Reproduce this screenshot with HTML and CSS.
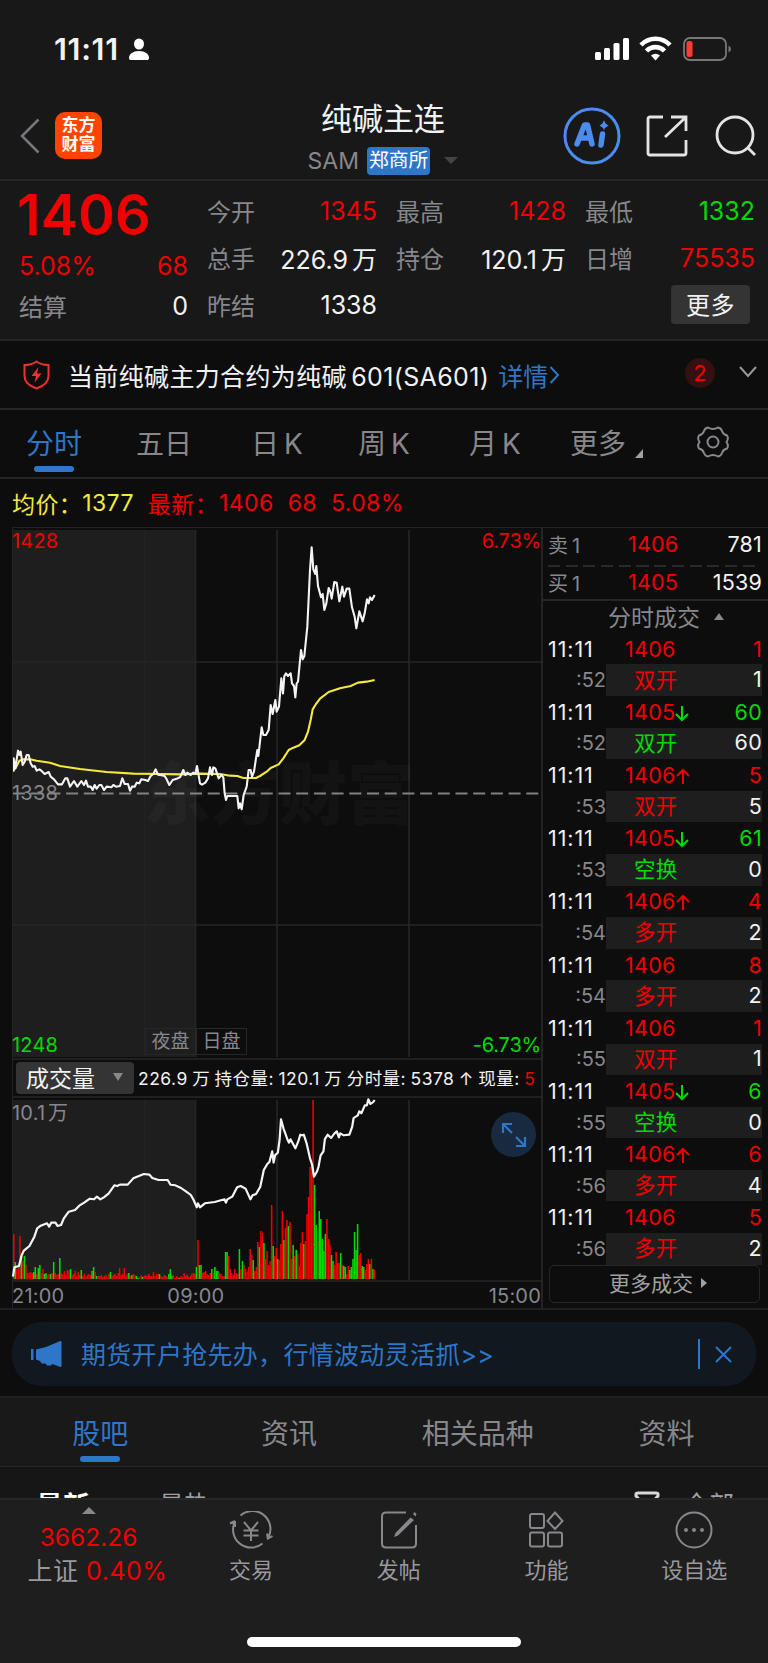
FILE: index.html
```html
<!DOCTYPE html>
<html lang="zh-CN">
<head>
  <meta charset="UTF-8" />
  <title>纯碱主连</title>
  <link rel="stylesheet" href="styles.css">
</head>
<body>

  <div class="status-bar">
    <span class="clock">11:11</span>
    <svg class="person" width="20" height="23" viewBox="0 0 20 23"><ellipse cx="10" cy="6" rx="5" ry="5.6"/><path d="M0 20c0-4 4-7 10-7s10 3 10 7c0 1.500-.7 2-2 2H2c-1.300 0-2-.5-2-2z"/></svg>
    <svg class="signals" width="135" height="26" viewBox="0 0 135 26">
      <rect x="0" y="16" width="6" height="8" rx="1.500"/><rect x="9" y="12" width="6" height="12" rx="1.500"/><rect x="18.500" y="7" width="6" height="17" rx="1.500"/><rect x="28" y="2" width="6" height="22" rx="1.500"/>
      <g fill="none" stroke="#fff" stroke-width="4.600"><path d="M46 9a20 20 0 0 1 29 0"/><path d="M51.500 15a12.500 12.500 0 0 1 18 0"/></g>
      <path d="M60.500 24.500l-4.500-5a6.500 6.500 0 0 1 9 0z"/>
      <rect x="89" y="2" width="42" height="22" rx="6" fill="none" stroke="#77777b" stroke-width="1.800"/>
      <rect x="91.500" y="5" width="6" height="16" rx="2.500" fill="#ff3b30"/>
      <path d="M133.500 9.500q2.500 1 2.500 3.500t-2.500 3.500z" fill="#77777b"/>
    </svg>
  </div>

  <header class="header">
    <svg class="back" width="20" height="36" viewBox="0 0 20 36"><path d="M18.500 1.500L2 18l16.500 16.500"/></svg>
    <div class="logo">东方<br>财富</div>
    <div class="title">
      <h1>纯碱主连</h1>
      <div class="subtitle"><span>SAM</span><b>郑商所</b><i></i></div>
    </div>
    <svg class="ai" width="58" height="58" viewBox="0 0 58 58">
      <circle cx="29" cy="29" r="27" fill="none" stroke="#4c8bf0" stroke-width="3"/>
      <g fill="none" stroke="#4c8bf0" stroke-width="5.500" stroke-linejoin="round" stroke-linecap="round"><path d="M14 37L21.500 18h3L29 37M17 31h10"/><path d="M39.500 27L38 38"/></g>
      <path d="M41 13q1 4 4.500 5.500Q42 20 41 23.500 40 20 36.500 18.500 40 17 41 13z" fill="#4c8bf0"/>
    </svg>
    <svg class="tool share" width="42" height="42" viewBox="0 0 42 42"><path d="M17 2H4Q2 2 2 4v34q0 2 2 2h34q2 0 2-2V25M25 2h15v14M40 2L19 22"/></svg>
    <svg class="tool search" width="42" height="42" viewBox="0 0 42 42"><circle cx="20" cy="20" r="18"/><path d="M32 32l8 8"/></svg>
  </header>

  <section class="quote">
    <div class="main-price">
      <strong>1406</strong>
      <div class="pair red"><span>5.08%</span><span>68</span></div>
      <div class="pair settle"><label>结算</label><span>0</span></div>
    </div>
    <div class="stats">
      <div class="pair"><label>今开</label><span class="red">1345</span></div>
      <div class="pair"><label>最高</label><span class="red">1428</span></div>
      <div class="pair"><label>最低</label><span class="green">1332</span></div>
      <div class="pair"><label>总手</label><span>226.9 万</span></div>
      <div class="pair"><label>持仓</label><span>120.1 万</span></div>
      <div class="pair"><label>日增</label><span class="red">75535</span></div>
      <div class="pair"><label>昨结</label><span>1338</span></div>
      <div></div>
      <div class="more-cell"><button class="more-btn">更多</button></div>
    </div>
  </section>

  <div class="notice">
    <svg width="27" height="30" viewBox="0 0 27 30"><path d="M13.500 1.500Q18 5 25.500 5v11c0 6-5 10-12 12.500C6.500 26 1.500 22 1.500 16V5Q9 5 13.500 1.500z" fill="none" stroke="#f23030" stroke-width="2"/><path d="M15.500 7L8.500 16h4.500l-1.500 6.500L18.500 13.500H14z" fill="#f23030"/></svg>
    <span class="notice-text">当前纯碱主力合约为纯碱 601(SA601)</span>
    <a>详情</a><svg class="go" width="11" height="18" viewBox="0 0 11 18"><path d="M1.500 1l7.500 8-7.500 8"/></svg>
    <span class="count">2</span>
    <svg class="fold" width="18" height="12" viewBox="0 0 18 12"><path d="M1 1l8 9 8-9"/></svg>
  </div>

  <nav class="periods">
    <span class="active">分时</span>
    <span>五日</span>
    <span>日 K</span>
    <span>周 K</span>
    <span>月 K</span>
    <span class="drop">更多</span>
    <svg width="34" height="32" viewBox="0 0 34 32"><path d="M12 1.500q5 3 10 0 3 .5 4 3.500 1 3.500 5 4.500 2 3-.5 6.500 2.500 3.500.5 6.500-4 1-5 4.500-1 3-4 3.500-5-3-10 0-3-.5-4-3.500-1-3.500-5-4.500-2-3 .5-6.500-2.500-3.500-.5-6.500 4-1 5-4.500 1-3 4-3.500z"/><circle cx="17" cy="16" r="5.500"/></svg>
  </nav>

  <div class="legend">
    <span class="yellow">均价：</span><span class="yellow avg">1377</span><span>最新：</span><span class="last">1406</span><span class="diff">68</span><span>5.08%</span>
  </div>

  <main class="board">
    <div class="charts">
      <div class="price-chart">
        <div class="watermark">东方财富</div>
        <svg width="530" height="531" viewBox="1 0 530 531">
          <rect class="night" x="1" y="2" width="183" height="527"/>
          <path class="grid" d="M183.500 2v527M265 2v527M397 2v527M0 134h530M0 397h530"/>
          <path class="grid faint" d="M132.500 2v527"/>
          <path class="base" d="M1 265.500h529"/>
          <g transform="translate(-12 -8) scale(.33333)">
            <polyline class="avg-line" points="40,752 48,742 58,722 70,718 90,718 110,722 150,728 180,738 240,747 320,756 400,761 480,762 540,763 600,761 660,762 690,767 712,768 730,774 768,774 780,768 800,755 812,744 836,733 850,715 866,690 880,683 898,676 914,660 924,635 932,600 938,568 948,552 960,536 986,516 1020,505 1052,498 1074,488 1100,485 1124,480"/>
            <polyline class="price-line" points="40,755 41,715 46,745 54,692 58,705 62,695 68,735 74,725 80,705 86,705 92,730 98,740 104,738 110,752 118,748 124,752 134,762 146,756 152,770 162,778 174,793 186,793 196,775 202,775 210,800 222,783 232,800 244,783 252,795 258,782 264,800 272,800 278,810 284,795 290,806 298,795 304,795 312,810 320,800 334,802 340,795 348,800 360,798 367,775 374,792 384,792 390,812 396,800 404,800 410,788 418,790 424,778 436,780 444,783 452,768 460,762 467,748 474,764 484,766 494,768 500,778 508,795 518,780 530,776 540,772 550,750 556,765 562,758 572,765 580,758 586,762 591,738 600,790 606,794 616,788 624,775 630,742 636,765 640,742 646,745 656,775 664,765 670,772 674,820 678,840 682,828 712,828 716,865 720,850 725,868 731,825 740,800 746,750 752,750 756,770 762,755 768,715 772,690 775,708 785,622 790,645 798,645 806,630 812,555 818,582 826,540 830,575 837,560 844,475 849,520 853,468 858,460 864,468 872,460 876,490 882,498 886,532 890,490 894,485 903,390 908,418 913,408 922,320 930,150 935,82 940,148 946,162 949,138 954,198 963,232 968,222 973,270 979,250 986,204 991,215 995,236 1003,186 1010,188 1018,244 1027,200 1032,230 1040,206 1048,206 1056,262 1064,290 1069,325 1078,274 1088,304 1094,280 1101,238 1106,250 1110,232 1116,240 1124,225"/>
          </g>
        </svg>
        <span class="mark top-left red">1428</span>
        <span class="mark top-right red">6.73%</span>
        <span class="mark middle">1338</span>
        <span class="mark bottom-left green">1248</span>
        <span class="mark bottom-right green">-6.73%</span>
        <div class="sessions"><span>夜盘</span><span>日盘</span></div>
      </div>

      <div class="indicator">
        <button>成交量<i></i></button>
        <p>226.9 万 持仓量: 120.1 万 分时量: 5378 ↑ 现量: <span class="red">5</span></p>
      </div>

      <div class="volume-chart">
        <svg width="530" height="183" viewBox="1 0 530 183">
          <rect class="night" x="1" y="2" width="183" height="180"/>
          <path class="grid" d="M183.500 2v180M265 2v180M397 2v180"/>
          <path class="grid faint" d="M132.500 2v180"/>
          <g id="bars"></g>
          <g transform="translate(-12 -88) scale(.3508 .33333)">
            <polyline class="price-line" points="37,800 41,772 54,768 62,735 68,722 84,708 98,680 106,655 116,647 134,640 140,650 146,638 158,638 164,648 174,645 182,625 196,605 214,600 226,587 240,578 256,566 268,568 276,560 286,568 296,562 310,550 326,526 334,528 342,524 364,524 380,505 396,498 410,492 426,494 434,504 452,510 478,510 486,524 500,526 516,534 530,544 544,555 552,570 561,592 564,580 570,592 584,580 612,576 640,568 644,578 648,568 662,560 676,532 686,528 700,536 714,568 720,556 730,552 742,530 752,480 762,462 768,456 776,424 780,458 784,436 792,428 797,390 801,328 808,355 820,390 824,398 828,388 842,415 850,395 856,374 862,376 866,374 874,400 884,446 890,465 895,500 904,484 908,470 914,436 922,424 926,388 934,374 944,384 952,372 960,364 966,382 970,370 980,376 996,374 1004,350 1008,324 1020,316 1024,304 1030,310 1040,286 1046,286 1050,268 1056,282 1064,276 1068,270"/>
          </g>
        </svg>
        <span class="mark vol-max">10.1 万</span>
        <div class="expand"><svg width="26" height="26" viewBox="0 0 26 26"><path d="M11 2H2v9M2 2l9 9M15 24h9v-9M24 24l-9-9"/></svg></div>
      </div>
      <div class="times"><span>21:00</span><span class="noon">09:00</span><span>15:00</span></div>
    </div>

    <aside class="ticks">
      <div class="order"><label>卖 1</label><span class="red">1406</span><b>781</b></div>
      <div class="split"></div>
      <div class="order"><label>买 1</label><span class="red">1405</span><b>1539</b></div>
      <div class="ticks-title">分时成交<i></i></div>
      <div id="tick-list"></div>
      <button class="all-ticks">更多成交<i></i></button>
    </aside>
  </main>

  <div class="banner-wrap">
    <div class="banner">
      <svg width="31" height="26" viewBox="0 0 31 26"><path d="M0 8h2.500v11H0zM5 8.500L15 6 27 1q3-2 3.500 0v24q-1 2-3.500 0l-6-2-1 1.500h-4l-1.500-2h-4L9 20l-4-1.500z"/></svg>
      <span>期货开户抢先办，行情波动灵活抓&gt;&gt;</span>
      <svg class="close" width="36" height="30" viewBox="0 0 36 30"><path d="M1 0v30M18 8l15 15M33 8L18 23"/></svg>
    </div>
  </div>

  <nav class="info-tabs">
    <span class="active">股吧</span><span>资讯</span><span>相关品种</span><span>资料</span>
  </nav>

  <div class="posts">
    <b>最新</b><span>最热</span>
    <svg width="26" height="26" viewBox="0 0 26 26"><path d="M2 5V3q0-1 2-1h18q2 0 2 1v2l-8 9v9l-6-3v-6z"/></svg>
    <span>全部</span>
  </div>

  <footer class="tabbar">
    <div class="index">
      <i></i>
      <span class="red">3662.26</span>
      <span class="change">上证 <em class="red">0.40%</em></span>
    </div>
    <div class="tab">
      <svg width="44" height="38" viewBox="0 0 44 38"><path d="M11.500 4.500A18 18 0 0 1 40 25l-1 3M39 28.500l-1-6M38.500 28l5-3M33.500 32.500A18 18 0 0 1 6 10.500M6 10l-5 2.500M6 10v6M15 11l7 8.500 7-8.500M14.500 19.500h15M14.500 24.500h15M22 19.500V30"/></svg>
      <span>交易</span>
    </div>
    <div class="tab">
      <svg width="38" height="38" viewBox="0 0 38 38"><path d="M26 1.500H6Q2 1.500 2 5.500v27q0 4 4 4h26q4 0 4-4V14"/><path class="pen" d="M30.500 6.500l3.500 2.500L18 24.500l-4 1.500L15.500 22zM33 3l1.500-2 2 2-1 2.500z"/></svg>
      <span>发帖</span>
    </div>
    <div class="tab">
      <svg width="38" height="38" viewBox="0 0 38 38"><rect x="3" y="3" width="14" height="14" rx="2"/><rect x="3" y="21.500" width="14" height="14" rx="2"/><rect x="21" y="21.500" width="14" height="14" rx="2"/><path d="M28 1.500l7.500 8.500-7.500 8-7.500-8z"/></svg>
      <span>功能</span>
    </div>
    <div class="tab">
      <svg width="38" height="38" viewBox="0 0 38 38"><circle cx="19" cy="19" r="17.500"/><g class="dots"><circle cx="11" cy="19" r="2"/><circle cx="19" cy="19" r="2"/><circle cx="27" cy="19" r="2"/></g></svg>
      <span>设自选</span>
    </div>
    <div class="home"></div>
  </footer>

  <script src="script.js"></script>
</body>
</html>
```

FILE: styles.css
```css
* {
  box-sizing: border-box;
}

body {
  margin: 0;
  width: 768px;
  height: 1663px;
  overflow: hidden;
  background: #0d0d0d;
  color: #f2f2f2;
  font-family: Inter, "Noto Sans CJK SC", sans-serif;
  font-size: 24px;
}

h1, p { margin: 0; }
i, em { font-style: normal; }
svg { display: block; flex: none; }

button {
  border: 0;
  padding: 0;
  color: #f2f2f2;
  font: inherit;
}

.red { color: #f00000; }
.green { color: #00dc00; }
.yellow { color: #f5e93b; }

/* status bar */
.status-bar {
  display: flex;
  align-items: center;
  height: 98px;
  padding: 0 36px 0 54px;
  background: #181818;
}

.clock {
  width: 75px;
  padding-bottom: 2px;
  font-size: 30.500px;
  font-weight: 600;
  letter-spacing: 0.700px;
}

.person { fill: #fff; }

.signals {
  margin-left: auto;
  margin-right: 2px;
  fill: #fff;
  overflow: visible;
}

/* header */
.header {
  display: flex;
  align-items: center;
  height: 83px;
  padding: 0 11px 5px 20px;
  background: #181818;
  border-bottom: 2px solid #262626;
}

.back {
  fill: none;
  stroke: #77777b;
  stroke-width: 2.500;
}

.logo {
  width: 47px;
  height: 47px;
  margin: -1px 0 0 15px;
  padding-top: 4px;
  border-radius: 10px;
  background: #ff4400;
  color: #fff;
  font-size: 17px;
  font-weight: 700;
  line-height: 19px;
  text-align: center;
}

.title {
  width: 240px;
  margin-left: 161px;
  padding-top: 2px;
  text-align: center;
}

.title h1 {
  height: 44px;
  font-size: 31px;
  font-weight: 400;
  line-height: 44px;
}

.subtitle {
  display: flex;
  align-items: center;
  justify-content: center;
  height: 36px;
  padding-top: 3px;
  color: #87878c;
  font-size: 23px;
}

.subtitle b {
  height: 28px;
  margin: 0 14px 0 8px;
  padding: 0 2px;
  border-radius: 4px;
  background: #2e76c8;
  color: #fff;
  font-size: 19.800px;
  font-weight: 400;
  line-height: 27px;
}

.subtitle i {
  border: 7px solid transparent;
  border-top: 7px solid #444;
  border-bottom: 0;
}

.ai { margin-left: auto; }

.tool {
  margin-left: 25px;
  fill: none;
  stroke: #e4e4e4;
  stroke-width: 2.800;
}

.search { margin-left: 27px; }

/* quote */
.quote {
  display: flex;
  gap: 20px;
  height: 160px;
  padding: 8px 12px 0 19px;
  background: #181818;
  border-bottom: 2px solid #262626;
}

.main-price { width: 169px; }

.main-price strong {
  display: block;
  height: 53px;
  margin-left: -2px;
  color: #f00000;
  font-size: 56px;
  font-weight: 600;
  line-height: 53px;
}

.pair {
  display: flex;
  align-items: center;
  justify-content: space-between;
  height: 47px;
  font-size: 25px;
  white-space: nowrap;
  word-spacing: -3px;
}

.main-price .pair.settle {
  height: 33px;
}

label { color: #87878c; }
.pair label { font-size: 24px; }

.stats {
  flex: 1;
  display: grid;
  grid-template-columns: repeat(3, 170px);
  column-gap: 19px;
  grid-auto-rows: 47px;
  margin: -2px 0 0 -1px;
}

.stats .pair span { padding-top: 1px; }

.more-cell {
  display: flex;
  align-items: center;
  justify-content: flex-end;
  padding-right: 5px;
}

.more-btn {
  width: 79px;
  height: 39px;
  padding-bottom: 3px;
  border-radius: 4px;
  background: #343434;
  letter-spacing: 0.500px;
}

/* contract notice */
.notice {
  display: flex;
  align-items: center;
  height: 69px;
  padding: 0 11px 0 23px;
  border-bottom: 2px solid #262626;
}

.notice-text {
  margin: 0 9px 0 18px;
  font-size: 25px;
  letter-spacing: 0.350px;
  word-spacing: -3px;
}

.notice a {
  color: #2e76c8;
  font-size: 25px;
}

.go {
  margin-left: 1px;
  fill: none;
  stroke: #2e76c8;
  stroke-width: 2;
}

.count {
  width: 30px;
  height: 30px;
  margin: -4px 24px 0 auto;
  border-radius: 50%;
  background: #351010;
  color: #f00000;
  font-size: 22px;
  line-height: 30px;
  text-align: center;
}

.fold {
  margin-top: -5px;
  fill: none;
  stroke: #99999d;
  stroke-width: 2;
}

/* period tabs */
.periods {
  display: grid;
  grid-template-columns: 110px 115px 107px 111px 101px 126px 34px;
  align-items: center;
  justify-items: start;
  height: 69px;
  padding: 0 0 3px 26px;
  border-bottom: 2px solid #262626;
  color: #87878c;
  font-size: 28px;
  white-space: nowrap;
  word-spacing: -3px;
}

.periods svg {
  fill: none;
  stroke: #87878c;
  stroke-width: 2;
}

.periods .drop::after {
  content: "";
  display: inline-block;
  margin-left: 9px;
  margin-bottom: -4px;
  border-left: 8px solid transparent;
  border-bottom: 9px solid #a0a0a4;
}

.active {
  position: relative;
  color: #2e76c8;
}

.active::after {
  content: "";
  position: absolute;
  left: 50%;
  bottom: -10px;
  width: 40px;
  height: 6px;
  margin-left: -20px;
  border-radius: 3px;
  background: #2e76c8;
}

.legend {
  display: flex;
  align-items: center;
  height: 48px;
  padding: 0 0 0 12px;
  color: #f00000;
  font-size: 23px;
  letter-spacing: 0.400px;
}

.avg { margin: 0 14px 0 0; }
.last { margin: 0 14px 0 1px; }
.diff { margin-right: 14px; }

/* charts */
.board {
  display: flex;
  height: 783px;
  border-bottom: 2px solid #202020;
}

.charts {
  width: 531px;
  margin-left: 12px;
  border: solid #242424;
  border-width: 1px 2px 0 1px;
}

.price-chart {
  position: relative;
  height: 532px;
  border-bottom: 2px solid #202020;
}

.night { fill: #1e1e1e; }

.grid {
  fill: none;
  stroke: #262626;
  stroke-width: 1.600;
}

.faint { stroke: #222; }

.base {
  stroke: #808086;
  stroke-width: 2;
  stroke-dasharray: 12 5.700;
}

.price-line, .avg-line {
  fill: none;
  stroke: #f4f4f4;
  stroke-width: 6.300;
  stroke-linejoin: round;
}

.avg-line { stroke: #f5e93b; }

.watermark {
  position: absolute;
  top: 212px;
  left: 130px;
  color: rgba(255, 255, 255, 0.028);
  font-size: 68px;
  font-weight: 900;
}

.mark {
  position: absolute;
  color: #87878c;
  font-size: 20px;
  line-height: 24px;
  letter-spacing: 0.200px;
}

.mark.red { color: #f00000; }
.mark.green { color: #00dc00; }
.top-left { top: 1px; left: -1px; }
.top-right { top: 1px; right: 0; letter-spacing: -0.200px; }
.middle { top: 253px; left: -1px; }
.bottom-left { bottom: 1px; left: -1px; }
.bottom-right { bottom: 1px; right: 0; letter-spacing: -0.200px; }
.vol-max { top: 3px; left: -1px; word-spacing: -3px; }

.sessions {
  position: absolute;
  left: 132px;
  bottom: 3px;
  display: flex;
  color: #87878c;
  font-size: 19px;
  line-height: 26px;
  text-align: center;
}

.sessions span {
  width: 51px;
  height: 27px;
  border: 1px solid #262626;
}

.indicator {
  display: flex;
  align-items: center;
  height: 38px;
  padding-left: 3px;
  border-bottom: 2px solid #202020;
}

.indicator button {
  display: flex;
  align-items: center;
  width: 118px;
  height: 32px;
  padding: 0 0 2px 10px;
  border-radius: 4px;
  background: #343434;
  font-size: 23px;
}

.indicator i {
  margin-left: 18px;
  border: 5px solid transparent;
  border-top: 8px solid #87878c;
  border-bottom: 0;
}

.indicator p {
  margin: -2px 0 0 4px;
  font-size: 17.500px;
  letter-spacing: 0.480px;
  word-spacing: -1px;
  white-space: nowrap;
}

.volume-chart {
  position: relative;
  height: 184px;
  border-bottom: 2px solid #202020;
}

.volume-chart svg { overflow: visible; }

.expand {
  position: absolute;
  top: 14px;
  right: 5px;
  display: flex;
  align-items: center;
  justify-content: center;
  width: 45px;
  height: 45px;
  border-radius: 50%;
  background: #182a40;
}

.expand svg {
  fill: none;
  stroke: #2e76c8;
  stroke-width: 2.200;
}

.times {
  display: grid;
  grid-template-columns: 1fr 1fr 1fr;
  margin-left: -1px;
  color: #87878c;
  font-size: 20px;
  letter-spacing: 0.200px;
  line-height: 29px;
}

.times .noon { margin-left: -21px; }
.times span:last-child { text-align: right; }

/* order book and ticks */
.ticks {
  flex: 1;
  padding: 0 6px 0 5px;
  border-top: 1px solid #242424;
}

.order {
  display: grid;
  grid-template-columns: 80px 60px 1fr;
  align-items: center;
  height: 37px;
  padding-bottom: 5px;
  font-size: 21.500px;
  letter-spacing: 0.200px;
  word-spacing: -2px;
}

.split + .order {
  padding-bottom: 7px;
}

.order label { font-size: 20px; }

.order b {
  font-weight: 400;
  text-align: right;
}

.split {
  height: 2px;
  margin-right: 6px;
  background: repeating-linear-gradient(90deg, #2a2a2a 0 12px, transparent 12px 17.700px);
}

.ticks-title {
  display: flex;
  align-items: center;
  height: 35px;
  margin: -5px -6px 0 -5px;
  padding: 0 0 3px 65px;
  border-top: 2px solid #262626;
  color: #87878c;
  font-size: 23px;
}

.ticks-title i {
  margin: 1px 0 0 14px;
  border: 5px solid transparent;
  border-bottom: 7px solid #87878c;
  border-top: 0;
}

#tick-list { margin-top: -1px; }

.tick {
  display: grid;
  grid-template-columns: 58px 1fr;
  grid-template-rows: 31.200px 32px;
  align-items: center;
  font-size: 21.500px;
}

.tick .time { letter-spacing: 0.900px; }

.tick .sec {
  color: #87878c;
  font-size: 20px;
  text-align: right;
}

.tick .deal {
  display: flex;
  align-items: center;
  justify-content: space-between;
  padding-left: 19px;
  letter-spacing: 0.300px;
}

.tick .kind {
  height: 31.500px;
  padding: 0 0 2px 28px;
  background: #1e1e1e;
}

.tick .kind span:first-child {
  margin-top: -2px;
}

.tick .deal svg {
  display: inline-block;
  fill: none;
  stroke: currentColor;
  stroke-width: 2;
  vertical-align: -2px;
}

.all-ticks {
  display: flex;
  align-items: center;
  width: 211px;
  height: 38px;
  margin-left: 1px;
  padding: 0 0 3px 59px;
  border: 1px solid #262626;
  border-radius: 5px;
  background: none;
  color: #a0a0a4;
  font-size: 21px;
}

.all-ticks i {
  margin: 2px 0 0 8px;
  border: 5px solid transparent;
  border-left: 6px solid #a0a0a4;
  border-right: 0;
}

/* promo banner */
.banner-wrap {
  height: 88px;
  padding: 12px 12px 0;
  border-bottom: 2px solid #202020;
}

.banner {
  display: flex;
  align-items: center;
  height: 64px;
  padding: 0 22px 0 19px;
  border-radius: 30px;
  background: #111820;
  color: #2e76c8;
  font-size: 25px;
  letter-spacing: 0.300px;
}

.banner svg { fill: #2e76c8; }

.banner span {
  margin: -2px 0 0 19px;
}

.banner .close {
  margin-left: auto;
  fill: none;
  stroke: #2e76c8;
  stroke-width: 2;
}

/* bottom */
.info-tabs {
  display: grid;
  grid-template-columns: repeat(4, 1fr);
  align-items: center;
  justify-items: center;
  height: 69px;
  padding: 0 7px 1px 6px;
  border-bottom: 1px solid #262626;
  background: #191919;
  color: #87878c;
  font-size: 28px;
}

.posts {
  display: flex;
  height: 31px;
  overflow: hidden;
  padding: 18px 34px 0 36px;
  background: #161616;
  color: #a0a0a4;
  font-size: 25px;
}

.posts b {
  margin-right: 69px;
  color: #fff;
  font-size: 27px;
  font-weight: 700;
}

.posts svg {
  margin: 6px 24px 0 auto;
  fill: none;
  stroke: #d8d8d8;
  stroke-width: 3;
}

.tabbar {
  position: relative;
  display: grid;
  grid-template-columns: 177px repeat(4, 147.800px);
  height: 166px;
  border-top: 2px solid #262626;
  background: #1e1e1e;
  color: #99999d;
}

.index {
  display: flex;
  flex-direction: column;
  align-items: center;
  padding-top: 7px;
  line-height: 34px;
}

.index span { font-size: 24.500px; }

.index .change {
  margin-left: 18px;
  font-size: 25px;
  letter-spacing: 0.500px;
}

.index i {
  margin-bottom: 6px;
  border: 7px solid transparent;
  border-bottom: 7px solid #87878c;
  border-top: 0;
}

.tab {
  display: flex;
  flex-direction: column;
  align-items: center;
  padding-top: 11px;
  font-size: 22px;
  line-height: 32px;
}

.tab svg {
  margin-bottom: 5px;
  fill: none;
  stroke: #87878c;
  stroke-width: 2;
}

.tab .dots, .tab .pen {
  fill: #87878c;
  stroke: none;
}

.home {
  position: absolute;
  left: 247px;
  bottom: 17px;
  width: 274px;
  height: 10px;
  border-radius: 5px;
  background: #fff;
}
```

FILE: script.js
```js
// one entry per minute: colour + height
const volumes = `
r45 g17 r10 r12 r43 g22 r18 g23 r14 r6 r6 r7 r6 g7 g12 r5 g11 g14 r6 r10 g5 g6 r4 r5 g5 r6 g17 r6 r4 r5
g21 r6 r5 r8 r4 r9 r8 g10 r4 r5 r8 r3 r7 r4 g9 r3 r5 r2 r4 r5 r4 g8 g12 r7 g3 r3 r3 r4 r2 r3
r4 r2 r5 g7 r3 r4 r5 r3 r6 r11 r4 r5 r11 r3 r5 g6 r3 g4 r5 r4 g3 g1 r2 r4 g2 r3 r4 r3 r5 r3
r3 r7 r3 r5 r5 g5 r3 r2 r4 r3 r2 g5 g10 g3 r4 r1 r3 r2 g1 r3 r2 r6 r3 r4 r2 r3 r5 r6 r5
g12 r39 g14 g14 r6 r7 r8 r5 r4 r6 g10 r6 g12 g8 g8 r6 r5 r3 r3 g27 g27 r23 r10 r6 r4 r10 r6 r5
g30 r10 g18 r14 r10 r7 r12 r30 r24 g19 r8 r12 r37 g32 r48 r46 g36 r20 r28 r14 r18 r74 g33 r23 r31 g20 r19 r35 r68
g39 r51 r59 g53 r57 r20 g34 r23 g29 r25 r13 r36 r47 g35 r38 r65 r82 r112 r115 r179 g94 g54 r38 g68 g60 g40 g28 g45 r60
r40 r34 g24 g18 r14 r27 r16 r16 g26 r14 g13 g12 r5 r13 g9 g12 g20 g47 g29 g55 r24 r26 g13 g12 r9 r15 r20 g15 r20 g10 r9
`.trim().split(/\s+/);

let bars = "";
volumes.forEach((v, i) => {
  const h = Number(v.slice(1));
  const color = v[0] === "r" ? "#f00000" : "#00dc00";
  bars += `<rect x="${(1 + i * 1.535).toFixed(2)}" y="${181 - h}" width="1.54" height="${h}" fill="${color}"/>`;
});
document.getElementById("bars").innerHTML = bars;

const ticks = [
  ["52", 1406, "", 1, "双开", "red", 1],
  ["52", 1405, "down", 60, "双开", "green", 60],
  ["53", 1406, "up", 5, "双开", "red", 5],
  ["53", 1405, "down", 61, "空换", "green", 0],
  ["54", 1406, "up", 4, "多开", "red", 2],
  ["54", 1406, "", 8, "多开", "red", 2],
  ["55", 1406, "", 1, "双开", "red", 1],
  ["55", 1405, "down", 6, "空换", "green", 0],
  ["56", 1406, "up", 6, "多开", "red", 4],
  ["56", 1406, "", 5, "多开", "red", 2]
];

const arrows = {
  up: '<svg class="red" width="14" height="17" viewBox="0 0 14 17"><path d="M7 16V2M1 8l6-6 6 6"/></svg>',
  down: '<svg class="green" width="14" height="17" viewBox="0 0 14 17"><path d="M7 1v14M1 9l6 6 6-6"/></svg>',
  "": ""
};

document.getElementById("tick-list").innerHTML = ticks.map(([sec, price, dir, qty, kind, color, change]) => {
  const qtyColor = dir === "down" ? "green" : "red";
  return `
  <div class="tick">
    <span class="time">11:11</span>
    <div class="deal"><span class="red">${price}${arrows[dir]}</span><span class="${qtyColor}">${qty}</span></div>
    <span class="sec">:${sec}</span>
    <div class="deal kind"><span class="${color}">${kind}</span><span>${change}</span></div>
  </div>`;
}).join("");
```
